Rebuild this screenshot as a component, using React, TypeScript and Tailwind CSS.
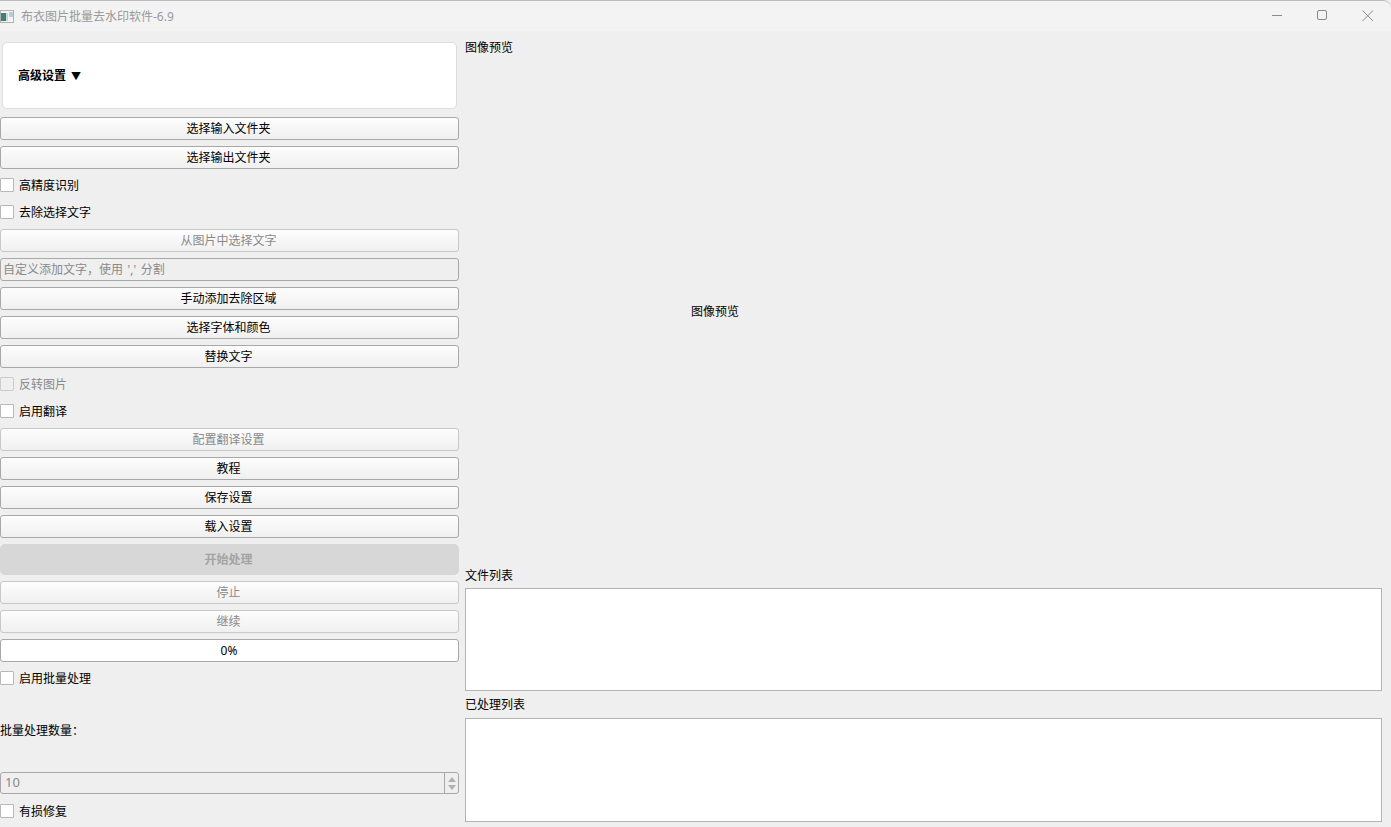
const fontStack = "font-['Noto_Sans','Noto_Sans_CJK_SC',sans-serif]";

function QtButton({ label, disabled, className = "" }: { label: string; disabled?: boolean; className?: string }) {
    return (
        <button
            className={`flex h-[23px] w-[459px] shrink-0 items-center justify-center rounded-[3px] border bg-gradient-to-b from-[#fdfdfd] to-[#f0f0f0] pt-[1px] pr-[2px] text-xs leading-none ${
                disabled ? "border-[#c8c8c8] text-[#8a8a8a]" : "border-[#a8a8a8] text-black"
            } ${className}`}
        >
            {label}
        </button>
    );
}

function QtCheck({ label, disabled, className = "" }: { label: string; disabled?: boolean; className?: string }) {
    return (
        <div className={`flex h-[14px] shrink-0 items-center gap-[5px] text-xs leading-none ${disabled ? "text-[#8a8a8a]" : "text-black"} ${className}`}>
            <span className={`h-[14px] w-[14px] rounded-[1px] border ${disabled ? "border-[#cccccc] bg-[#efefef]" : "border-[#b8b8b8] bg-white"}`} />
            <span className="pt-[2px]">{label}</span>
        </div>
    );
}

function TitleBar() {
    return (
        <div className="flex h-[31px] shrink-0 justify-between rounded-tr-lg border-t border-[#bdbdbd] bg-[#f3f3f3]">
            <div className="flex items-center gap-[7px]">
                <svg width="14" height="13" viewBox="0 0 14 13">
                    <rect x="0.5" y="0.5" width="13" height="12" fill="#f4f4f4" stroke="#b0b0b0" />
                    <rect x="1" y="3" width="5" height="8" fill="#3f7f78" />
                    <rect x="6" y="3" width="2" height="8" fill="#c9d6d4" />
                    <rect x="9" y="2" width="4" height="5" fill="#b9cbd4" />
                </svg>
                <span className="pt-[1px] text-xs leading-none text-[#9a9a9a]">布衣图片批量去水印软件-6.9</span>
            </div>
            <div className="flex">
                <svg width="46" height="29" viewBox="0 0 46 29">
                    <path d="M19 14.5H29" stroke="#8a8a8a" strokeWidth="1" />
                </svg>
                <svg width="46" height="29" viewBox="0 0 46 29">
                    <rect x="18.5" y="9.5" width="9" height="9" rx="1.5" fill="none" stroke="#8a8a8a" />
                </svg>
                <svg width="46" height="29" viewBox="0 0 46 29">
                    <path d="M17.5 9.5L28 20M28 9.5L17.5 20" stroke="#8a8a8a" strokeWidth="1" />
                </svg>
            </div>
        </div>
    );
}

function LeftColumn() {
    return (
        <div className="flex w-[459px] shrink-0 flex-col pt-[11px]">
            <div className="ml-[2px] flex h-[67px] w-[455px] shrink-0 items-center rounded-[5px] border border-[#dedede] bg-white pt-[1px] pl-[15px] text-xs font-bold text-black">
                高级设置<span className="ml-[5px] text-[10px] leading-none">▼</span>
            </div>
            <QtButton label="选择输入文件夹" className="mt-[8px]" />
            <QtButton label="选择输出文件夹" className="mt-[6px]" />
            <QtCheck label="高精度识别" className="mt-[9px]" />
            <QtCheck label="去除选择文字" className="mt-[13px]" />
            <QtButton label="从图片中选择文字" disabled className="mt-[10px]" />
            <div className="mt-[6px] flex h-[23px] w-[459px] shrink-0 items-center rounded-[3px] border border-[#a8a8a8] bg-[#efefef] pt-[1px] pl-[2px] text-xs leading-none text-[#8a8a8a] [word-spacing:1.5px]">
                自定义添加文字，使用 ',' 分割
            </div>
            <QtButton label="手动添加去除区域" className="mt-[6px]" />
            <QtButton label="选择字体和颜色" className="mt-[6px]" />
            <QtButton label="替换文字" className="mt-[6px]" />
            <QtCheck label="反转图片" disabled className="mt-[9px]" />
            <QtCheck label="启用翻译" className="mt-[13px]" />
            <QtButton label="配置翻译设置" disabled className="mt-[10px]" />
            <QtButton label="教程" className="mt-[6px]" />
            <QtButton label="保存设置" className="mt-[6px]" />
            <QtButton label="载入设置" className="mt-[6px]" />
            <div className="mt-[6px] flex h-[31px] w-[459px] shrink-0 items-center justify-center rounded-[5px] bg-[#d7d7d7] pt-[1px] pr-[2px] text-xs font-bold leading-none text-[#a3a3a3]">
                开始处理
            </div>
            <QtButton label="停止" disabled className="mt-[6px]" />
            <QtButton label="继续" disabled className="mt-[6px]" />
            <div className="mt-[6px] flex h-[23px] w-[459px] shrink-0 items-center justify-center rounded-[3px] border border-[#a8a8a8] bg-white pt-[1px] pr-[1px] text-xs leading-none text-black">
                0%
            </div>
            <QtCheck label="启用批量处理" className="mt-[9px]" />
            <div className="mt-[39px] h-[14px] shrink-0 text-xs leading-[14px] text-black">批量处理数量：</div>
            <div className="mt-[34px] flex h-[22px] w-[459px] shrink-0 items-stretch rounded-[3px] border border-[#a8a8a8] bg-[#efefef] text-xs text-[#8a8a8a]">
                <span className="flex flex-1 items-center pl-[4px] text-[13px]">10</span>
                <span className="flex w-[14px] flex-col items-center justify-center gap-[3px] border-l border-[#a8a8a8]">
                    <svg width="8" height="5" viewBox="0 0 8 5"><path d="M4 0L8 5H0Z" fill="#b0b0b0" /></svg>
                    <svg width="8" height="5" viewBox="0 0 8 5"><path d="M0 0H8L4 5Z" fill="#b0b0b0" /></svg>
                </span>
            </div>
            <QtCheck label="有损修复" className="mt-[10px]" />
        </div>
    );
}

function RightColumn() {
    return (
        <div className="ml-[6px] flex w-[917px] shrink-0 flex-col pt-[10px] text-xs text-black">
            <div className="h-[14px] leading-[14px]">图像预览</div>
            <div className="flex h-[514px] shrink-0 items-center pl-[226px]">图像预览</div>
            <div className="h-[14px] leading-[14px]">文件列表</div>
            <div className="mt-[5px] h-[103px] shrink-0 border border-[#b4b4b4] bg-white" />
            <div className="mt-[7px] h-[14px] leading-[14px]">已处理列表</div>
            <div className="mt-[6px] h-[104px] shrink-0 border border-[#b4b4b4] bg-white" />
        </div>
    );
}

export default function App() {
    return (
        <div className={`flex h-[827px] w-[1391px] flex-col overflow-hidden bg-[#efefef] ${fontStack}`}>
            <TitleBar />
            <div className="flex flex-1">
                <LeftColumn />
                <RightColumn />
            </div>
        </div>
    );
}
